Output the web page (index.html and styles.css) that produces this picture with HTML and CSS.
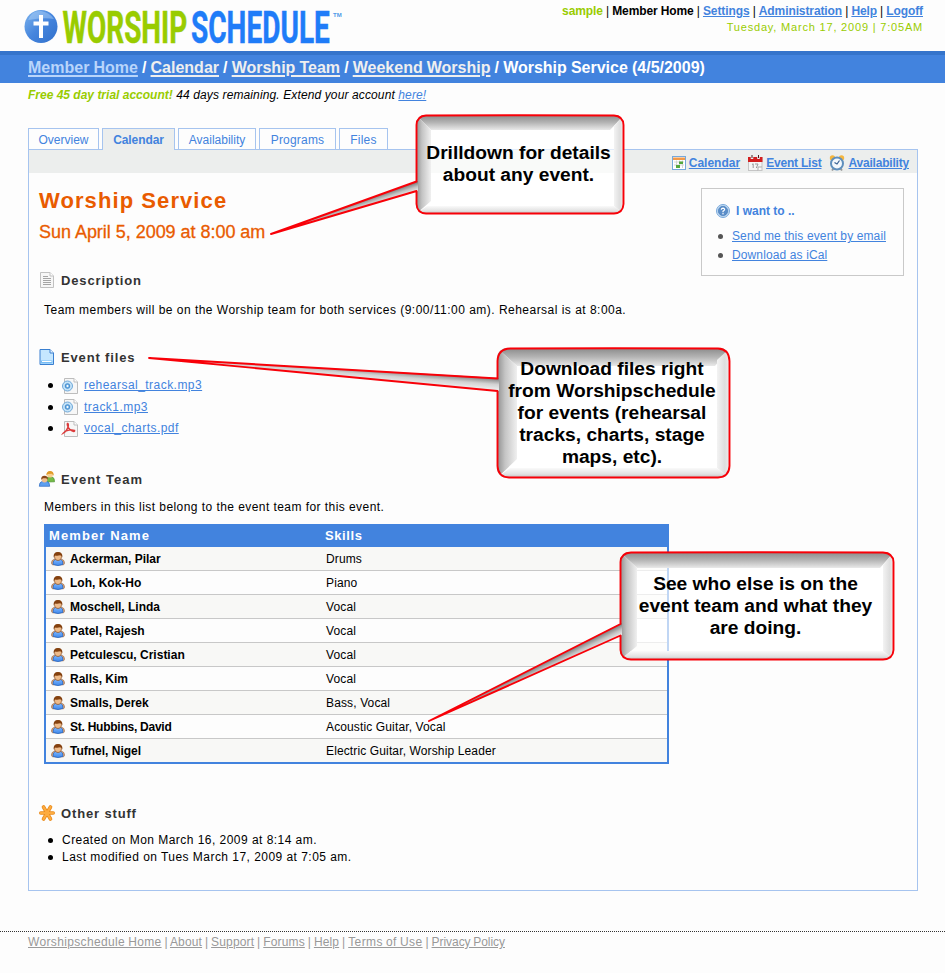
FILE: index.html
```html
<!DOCTYPE html>
<html lang="en">
<head>
<meta charset="utf-8">
<title>Worship Service</title>
<link rel="stylesheet" href="styles.css">
</head>
<body>
<svg class="defs" width="0" height="0" aria-hidden="true">
  <defs>
    <linearGradient id="orb" x1="0" y1="0" x2="1" y2="1"><stop offset="0" stop-color="#7db4ee"/><stop offset=".5" stop-color="#4585dd"/><stop offset="1" stop-color="#3170cb"/></linearGradient>
    <linearGradient id="top" x1="0" y1="0" x2="0" y2="1"><stop offset="0" stop-color="#8a8a8a"/><stop offset=".5" stop-color="#b4b4b4"/><stop offset="1" stop-color="#e9e9e9"/></linearGradient>
    <linearGradient id="left" x1="0" y1="0" x2="1" y2="0"><stop offset="0" stop-color="#8f8f8f"/><stop offset=".4" stop-color="#c4c4c4"/><stop offset="1" stop-color="#f0f0f0"/></linearGradient>
    <linearGradient id="right" x1="0" y1="0" x2="1" y2="0"><stop offset="0" stop-color="#f3f3f3"/><stop offset=".6" stop-color="#dedede"/><stop offset="1" stop-color="#f0f0f0"/></linearGradient>
    <linearGradient id="bottom" x1="0" y1="0" x2="0" y2="1"><stop offset="0" stop-color="#fafafa"/><stop offset=".6" stop-color="#e2e2e2"/><stop offset="1" stop-color="#bdbdbd"/></linearGradient>
    <linearGradient id="shirt" x1="0" y1="0" x2="0" y2="1"><stop offset="0" stop-color="#7db6ff"/><stop offset="1" stop-color="#3c86ea"/></linearGradient>
    <linearGradient id="tail1" gradientUnits="userSpaceOnUse" x1="416" y1="182" x2="419" y2="191"><stop offset="0" stop-color="#777"/><stop offset=".5" stop-color="#c2c2c2"/><stop offset="1" stop-color="#f2f2f2"/></linearGradient>
    <linearGradient id="tail2" gradientUnits="userSpaceOnUse" x1="498" y1="378" x2="497" y2="391"><stop offset="0" stop-color="#777"/><stop offset=".5" stop-color="#d2d2d2"/><stop offset="1" stop-color="#f2f2f2"/></linearGradient>
    <linearGradient id="tail3" gradientUnits="userSpaceOnUse" x1="616" y1="626" x2="621" y2="636"><stop offset="0" stop-color="#777"/><stop offset=".5" stop-color="#c2c2c2"/><stop offset="1" stop-color="#f2f2f2"/></linearGradient>
    <symbol id="i-user" viewBox="0 0 14 14">
      <path d="M.4 11.500Q.4 7.800 3.500 7.200H10.500Q13.600 7.800 13.600 11.500L12.500 12.800H1.500Z" fill="#dfa878" stroke="#99694a" stroke-width=".7"/>
      <path d="M2 12.300Q2 8.300 4.300 7.400L7 8.400L9.700 7.400Q12 8.300 12 12.300Q7 14.900 2 12.300Z" fill="url(#shirt)" stroke="#2b68c0" stroke-width=".8"/>
      <ellipse cx="7" cy="4.600" rx="3.600" ry="3.900" fill="#eebb8a" stroke="#8f5528" stroke-width=".7"/>
      <path d="M2.700 5.400Q2 .2 7 .1Q12 .2 11.300 5.400Q10.600 3.900 9.300 3.300Q6 4.200 4.200 3.400Q3.500 4 2.700 5.400Z" fill="#84410f"/>
    </symbol>
    <symbol id="i-audio" viewBox="0 0 16 16">
      <path d="M2.500.5H12L15.500 4V15.500H2.500Z" fill="#f7f7f7" stroke="#bdbdbd"/>
      <path d="M12 .5V4H15.500" fill="#fff" stroke="#bdbdbd"/>
      <circle cx="5.500" cy="8" r="5" fill="#c5e3f7" stroke="#70a9da"/>
      <circle cx="5.500" cy="8" r="2.300" fill="#7bb6e5" stroke="#438bcf"/><circle cx="5.500" cy="8" r=".9" fill="#fff"/>
    </symbol>
  </defs>
</svg>

<header class="top">
  <svg class="logo" width="330" height="48" viewBox="0 0 330 48">
    <circle cx="17" cy="26.500" r="16.500" fill="url(#orb)"/>
    <path d="M4 20Q8 10 17 11Q25 12 30 19Q20 17 4 20Z" fill="#b3d5f8" opacity=".45"/>
    <path d="M17 15V38M9.500 23.500H24.500" stroke="#fff" stroke-width="4"/>
    <text class="logo-text green" transform="translate(38.5 42.500) scale(.64 1)" textLength="195" lengthAdjust="spacingAndGlyphs">WORSHIP</text>
    <text class="logo-text blue" transform="translate(167 42.500) scale(.64 1)" textLength="217" lengthAdjust="spacingAndGlyphs">SCHEDULE</text>
    <text class="logo-tm" x="309" y="17">TM</text>
  </svg>
  <div class="account">
    <div class="account-links"><b class="user">sample</b> | <b>Member Home</b> | <a href="#">Settings</a> | <a href="#">Administration</a> | <a href="#">Help</a> | <a href="#">Logoff</a></div>
    <div class="date">Tuesday, March 17, 2009 | 7:05AM</div>
  </div>
</header>

<nav class="crumbs"><a class="first" href="#">Member Home</a> / <a href="#">Calendar</a> / <a href="#">Worship Team</a> / <a href="#">Weekend Worship</a> / <span>Worship Service (4/5/2009)</span></nav>
<p class="trial"><b>Free 45 day trial account!</b> 44 days remaining. Extend your account <a href="#">here!</a></p>

<nav class="tabs">
  <a class="tab t1" href="#">Overview</a><a class="tab t2 active" href="#">Calendar</a><a class="tab t3" href="#">Availability</a><a class="tab t4" href="#">Programs</a><a class="tab t5" href="#">Files</a>
</nav>

<main class="panel">
  <div class="toolbar">
    <a class="tool" href="#"><svg width="14" height="14" viewBox="0 0 14 14"><rect x=".5" y=".5" width="13" height="13" fill="#fff" stroke="#76a9dc"/><path d="M1 1.500H13V4H1Z" fill="#f39a4a"/><path d="M2 6H12M2 9H12M4.500 4.500V12M7.500 4.500V12M10.500 4.500V12" stroke="#d5d5d5"/><path d="M7 5.500H11V8H7ZM4 9H8V12H4Z" fill="#55a83d"/></svg><span>Calendar</span></a>
    <a class="tool" href="#"><svg width="15" height="16" viewBox="0 0 15 16"><rect x=".5" y="2.500" width="13.500" height="13" fill="#f5f5f5" stroke="#c5c5c5"/><path d="M0 2H14.500V7H0Z" fill="#d21e1e"/><path d="M4 0V4M10.500 0V4" stroke="#eee" stroke-width="2.500"/><path d="M4 0V3M10.500 0V3" stroke="#4a2020"/><path d="M4 9.500L5.200 8.800V13M7 9H10L8.300 13" fill="none" stroke="#999"/><path d="M10 15.500V12H14" fill="#fff" stroke="#aaa"/></svg><span class="tight">Event List</span></a>
    <a class="tool" href="#"><svg width="16" height="16" viewBox="0 0 16 16"><circle cx="3.500" cy="3" r="2.700" fill="#f4b63f"/><circle cx="12.500" cy="3" r="2.700" fill="#f4b63f"/><path d="M3 15.500L5 13M13 15.500L11 13" stroke="#999" stroke-width="2"/><circle cx="8" cy="8.500" r="6" fill="#f3f8fc" stroke="#5f8fbd" stroke-width="2"/><path d="M10.500 5.500L8 9L5.500 7.500" fill="none" stroke="#355f92" stroke-width="1.200"/></svg><span class="tight">Availability</span></a>
  </div>

  <div class="intro">
    <div class="title">
      <h1>Worship Service</h1>
      <h2>Sun April 5, 2009 at 8:00 am</h2>
    </div>
    <aside class="wants">
      <h4><svg width="14" height="14" viewBox="0 0 14 14"><circle cx="7" cy="7" r="6.500" fill="#c6def4" stroke="#79a9dc"/><circle cx="7" cy="7" r="4.700" fill="#5b8ec9" stroke="#3e75b6" stroke-width=".6"/><path d="M5.300 5.800Q5.400 4.200 7 4.200Q8.700 4.300 8.600 5.700Q8.400 6.500 7 7.200V8.200" fill="none" stroke="#fff" stroke-width="1.200"/><circle cx="7" cy="9.800" r=".75" fill="#fff"/></svg>I want to ..</h4>
      <ul><li><a href="#">Send me this event by email</a></li><li><a href="#">Download as iCal</a></li></ul>
    </aside>
  </div>

  <section class="description">
    <h3><svg width="16" height="16" viewBox="0 0 16 16"><path d="M1.500.5H11L14.500 4V15.500H1.500Z" fill="#f7f7f7" stroke="#c1c1c1"/><path d="M11 .5V4H14.500" fill="#fff" stroke="#c1c1c1"/><path d="M4 4.500H9M4 6.500H12M4 8.500H12M4 10.500H12M4 12.500H12" stroke="#a5a5a5"/></svg>Description</h3>
    <p>Team members will be on the Worship team for both services (9:00/11:00 am). Rehearsal is at 8:00a.</p>
  </section>

  <section class="files">
    <h3><svg width="16" height="16" viewBox="0 0 16 16"><path d="M1 .5H11L14.500 4V15.500H1Z" fill="#c5e7ff" stroke="#3a7fd0"/><path d="M11 .5V4H14.500" fill="#eaf7ff" stroke="#3a7fd0"/><path d="M2 11.500H13.500V14.500H2Z" fill="#77bdf5"/><path d="M3 12.500H12.500" stroke="#fff"/></svg>Event files</h3>
    <ul>
      <li><svg width="16" height="16"><use href="#i-audio"/></svg><a href="#">rehearsal_track.mp3</a></li>
      <li><svg width="16" height="16"><use href="#i-audio"/></svg><a href="#">track1.mp3</a></li>
      <li><svg width="16" height="16" viewBox="0 0 16 16"><path d="M2.500.5H12L15.500 4V15.500H2.500Z" fill="#f7f7f7" stroke="#bdbdbd"/><path d="M12 .5V4H15.500" fill="#fff" stroke="#bdbdbd"/><path d="M.8 12.500Q5 10 6.300 5.500Q6.800 2.500 5.600 2.300Q4.600 2.800 6 6Q7.800 9.500 11.800 10.500Q13 10.300 12.600 9.300Q9 8.300 4.300 10Q1.500 11.300.8 12.500Z" fill="none" stroke="#dc3b3b" stroke-width="1.300"/></svg><a href="#">vocal_charts.pdf</a></li>
    </ul>
  </section>

  <section class="team">
    <h3><svg width="16" height="16" viewBox="0 0 16 16"><path d="M6.500 11Q6.500 6.500 9 6H13Q15.700 6.500 15.500 10.800Z" fill="#74bb45" stroke="#4e9130" stroke-width=".7"/><circle cx="11" cy="3.700" r="2.900" fill="#f8cf8e"/><path d="M7.300 4.500Q7.300 0 11 0Q15 0 14.700 4.800L12.900 2.700L9 3Z" fill="#e09a27"/><path d="M.3 15.300Q.3 11 3 10.500H8Q10.700 11 10.700 15.300Z" fill="#5d9ff0" stroke="#2b68c0" stroke-width=".7"/><circle cx="5.500" cy="8.500" r="2.900" fill="#efbd8c"/><path d="M2.200 8.800Q1.900 4.800 5.500 4.800Q9.100 4.800 8.800 8.800L7.200 7.300H4Z" fill="#8a4718"/></svg>Event Team</h3>
    <p>Members in this list belong to the event team for this event.</p>
    <div class="table">
      <div class="row head"><span>Member Name</span><span>Skills</span></div>
      <div class="row"><b><svg width="14" height="14"><use href="#i-user"/></svg>Ackerman, Pilar</b><span>Drums</span></div>
      <div class="row"><b><svg width="14" height="14"><use href="#i-user"/></svg>Loh, Kok-Ho</b><span>Piano</span></div>
      <div class="row"><b><svg width="14" height="14"><use href="#i-user"/></svg>Moschell, Linda</b><span>Vocal</span></div>
      <div class="row"><b><svg width="14" height="14"><use href="#i-user"/></svg>Patel, Rajesh</b><span>Vocal</span></div>
      <div class="row"><b><svg width="14" height="14"><use href="#i-user"/></svg>Petculescu, Cristian</b><span>Vocal</span></div>
      <div class="row"><b><svg width="14" height="14"><use href="#i-user"/></svg>Ralls, Kim</b><span>Vocal</span></div>
      <div class="row"><b><svg width="14" height="14"><use href="#i-user"/></svg>Smalls, Derek</b><span>Bass, Vocal</span></div>
      <div class="row"><b class="tight"><svg width="14" height="14"><use href="#i-user"/></svg>St. Hubbins, David</b><span>Acoustic Guitar, Vocal</span></div>
      <div class="row"><b><svg width="14" height="14"><use href="#i-user"/></svg>Tufnel, Nigel</b><span>Electric Guitar, Worship Leader</span></div>
    </div>
  </section>

  <section class="other">
    <h3><svg width="16" height="16" viewBox="0 0 16 16"><path d="M8 8L4.500 2M8 8L11.500 2M8 8H1.800M8 8H14.200M8 8L4.500 14M8 8L11.500 14" stroke="#e88a1c" stroke-width="3.600" stroke-linecap="round"/><path d="M8 8L4.500 2M8 8L11.500 2M8 8H1.800M8 8H14.200M8 8L4.500 14M8 8L11.500 14" stroke="#fdab3f" stroke-width="2.200" stroke-linecap="round"/></svg>Other stuff</h3>
    <ul><li>Created on Mon March 16, 2009 at 8:14 am.</li><li>Last modified on Tues March 17, 2009 at 7:05 am.</li></ul>
  </section>
</main>

<footer class="footer"><a class="home" href="#">Worshipschedule Home</a> | <a href="#">About</a> | <a href="#">Support</a> | <a href="#">Forums</a> | <a href="#">Help</a> | <a class="terms" href="#">Terms of Use</a> | <a class="tight" href="#">Privacy Policy</a></footer>

<div class="callout c1">
  <svg width="356" height="124" viewBox="270 113 356 124">
    <clipPath id="k1"><rect x="416" y="115" width="208" height="99" rx="9"/></clipPath>
    <g clip-path="url(#k1)">
      <rect x="416" y="115" width="208" height="99" fill="#fff" opacity=".67"/>
      <path d="M416 115H624L610 130H431Z" fill="url(#top)"/><path d="M416 115L431 130V201L416 214Z" fill="url(#left)"/><path d="M624 115V214L614 206V126Z" fill="url(#right)"/><path d="M416 214L427 206H614L624 214Z" fill="url(#bottom)"/>
    </g>
    <path d="M271 234L418 181V191Z" fill="url(#tail1)"/>
    <path class="edge" d="M271 234L416.500 181.500V125Q417 116 426 115.500Q520 115 614 115.500Q623 116 623.500 125V204Q623 213 614 213.500H426Q417 213 416.500 204V191Z"/>
  </svg>
  <p>Drilldown for details<br>about any event.</p>
</div>
<div class="callout c2">
  <svg width="584" height="134" viewBox="148 346 584 134">
    <clipPath id="k2"><rect x="497" y="348" width="233" height="130" rx="10"/></clipPath>
    <g clip-path="url(#k2)">
      <rect x="497" y="348" width="233" height="130" fill="#fff" opacity=".67"/>
      <path d="M497 348H730L715 366H517Z" fill="url(#top)"/><path d="M497 348L517 366V459L497 478Z" fill="url(#left)"/><path d="M730 348V478L717 468V360Z" fill="url(#right)"/><path d="M497 478L510 468H717L730 478Z" fill="url(#bottom)"/>
    </g>
    <path d="M149 358L499 378V391Z" fill="url(#tail2)"/>
    <path class="edge" d="M149 358L497.500 378.500V361Q498 349 510 348.500Q614 348 718 348.500Q729 349 729.500 361V466Q729 477 718 477.500H509Q498 477 497.500 466V391Z"/>
  </svg>
  <p>Download files right<br>from Worshipschedule<br>for events (rehearsal<br>tracks, charts, stage<br>maps, etc).</p>
</div>
<div class="callout c3">
  <svg width="468" height="173" viewBox="428 550 468 173">
    <clipPath id="k3"><rect x="620" y="552" width="274" height="108" rx="9"/></clipPath>
    <g clip-path="url(#k3)">
      <rect x="620" y="552" width="274" height="108" fill="#fff" opacity=".67"/>
      <path d="M620 552H894L880 568H637Z" fill="url(#top)"/><path d="M620 552L637 568V646L620 660Z" fill="url(#left)"/><path d="M894 552V660L883 651V565Z" fill="url(#right)"/><path d="M620 660L631 651H883L894 660Z" fill="url(#bottom)"/>
    </g>
    <path d="M429 721L622 623V635Z" fill="url(#tail3)"/>
    <path class="edge" d="M429 721L620.500 624V562Q621 553 631 552.500Q757 552 883 552.500Q893 553 893.500 562V650Q893 659 883 659.500H631Q621 659 620.500 650V635.500Z"/>
  </svg>
  <p>See who else is on the<br>event team and what they<br>are doing.</p>
</div>
</body>
</html>
```
FILE: styles.css
```css
* { box-sizing: border-box; }
body { position: relative; margin: 0; width: 945px; height: 973px; overflow: hidden; background: #fdfdfd; color: #000; font: 12px/17px "Liberation Sans", Arial, sans-serif; }
h1, h2, h3, h4, p, ul { margin: 0; padding: 0; }
ul { list-style: none; }
a { color: #4283de; text-underline-offset: 1px; }
svg { display: block; flex: none; overflow: visible; }
.defs { position: absolute; }

.top { display: flex; justify-content: space-between; height: 51px; padding: 0 22px 0 24px; }
.logo-text { font: bold 44.500px Roboto, sans-serif; stroke-width: .5px; }
.green { fill: #9c0; stroke: #9c0; }
.blue { fill: #1f7cf8; stroke: #1f7cf8; }
.logo-tm { font: bold 6px "Liberation Sans", sans-serif; fill: #4e9ae8; }
.account { padding-top: 3px; text-align: right; line-height: 16px; }
.account a { font-weight: bold; }
.account-links { letter-spacing: -.1px; word-spacing: -.1px; }
.user { color: #9c0; }
.date { color: #9c0; font-size: 11px; letter-spacing: .81px; }

.crumbs { height: 32px; padding: 4px 28px 0; border-top: 4px solid #3574cb; background: #4283de; color: #fff; font: bold 16px/18px "Liberation Sans", Arial, sans-serif; word-spacing: -.35px; }
.crumbs a { color: #efefef; text-underline-offset: 2px; text-decoration-thickness: 2px; }
.crumbs .first { color: #b9d5fb; }
.trial { height: 45px; padding: 4px 28px 0; font-style: italic; letter-spacing: .12px; }
.trial b { color: #9c0; letter-spacing: 0; }

.tabs { position: relative; z-index: 1; display: flex; gap: 3px; height: 22px; padding-left: 28px; }
.tab { height: 21px; border: 1px solid #a6c4ef; border-bottom: 0; text-align: center; line-height: 22px; text-decoration: none; }
.tab.active { height: 22px; background: #eceeed; font-weight: bold; }
.t1 { width: 71px; }
.t2 { width: 73px; letter-spacing: -.1px; }
.t3 { width: 78px; }
.t4 { width: 77px; letter-spacing: .2px; }
.t5 { width: 49px; letter-spacing: .2px; }

.panel { width: 890px; height: 742px; margin: -1px 0 0 28px; border: 1px solid #a6c4ef; }
.toolbar { display: flex; justify-content: flex-end; gap: 8px; height: 23px; padding: 2px 8px 0 0; background: #eceeed; }
.tool { display: flex; align-items: center; gap: 3px; height: 23px; font-weight: bold; }
.tool:nth-child(n+2) { gap: 3px; }
.tool svg { margin-top: -1px; }
.tight { letter-spacing: -.2px; }

.intro { display: flex; justify-content: space-between; height: 98px; padding: 15px 13px 0 10px; }
h1 { padding-top: 1px; color: #e95b00; font-size: 22px; line-height: 24px; letter-spacing: 1.080px; }
h2 { margin-top: 8px; color: #e95b00; font-size: 18px; line-height: 22px; font-weight: normal; letter-spacing: -.03px; -webkit-text-stroke: .3px #e95b00; }
.wants { width: 203px; height: 88px; padding: 15px 14px; border: 1px solid #c9c9c9; color: #4283de; }
.wants h4 { display: flex; align-items: center; gap: 6px; height: 15px; font-size: 12px; }
.wants h4 svg { margin-top: -1px; }
.wants ul { padding-top: 8px; }
.wants li { display: flex; align-items: center; height: 19px; padding-left: 2px; letter-spacing: .12px; }
li::before { content: ""; flex: none; width: 5px; height: 5px; border-radius: 50%; background: #000; }
.wants li::before { margin-right: 9px; background: #555; }

h3 { display: flex; align-items: center; gap: 6px; height: 18px; padding-left: 10px; color: #333; font-size: 13px; letter-spacing: .85px; }
section { letter-spacing: .46px; }
section p { padding-left: 15px; }
.description { height: 77px; }
.description p { padding-top: 13px; letter-spacing: .48px; }
.files { height: 122px; }
.files ul { padding-top: 9px; }
.files li { display: flex; align-items: center; height: 21.500px; padding-left: 19px; }
.files li::before { margin-right: 9px; }
.files li a { margin-left: 6px; }
.team { height: 334px; }
.team h3 { letter-spacing: 1px; }
.team p { padding-top: 11px; letter-spacing: .44px; }
.table { width: 625px; margin: 8px 0 0 15px; border: 2px solid #4283de; border-top: 0; letter-spacing: .13px; }
.row { display: grid; grid-template-columns: 280px 1fr; height: 24px; border-bottom: 1px solid #c8c8c8; line-height: 24px; }
.row:nth-child(even) { background: #f8f8f6; }
.row:last-child { height: 23px; border: 0; }
.row b { display: flex; align-items: center; gap: 5px; padding-left: 5px; letter-spacing: 0; }
.row b.tight { letter-spacing: -.25px; }
.row.head { height: 23px; border: 0; background: #4283de; color: #fff; font-weight: bold; font-size: 13px; letter-spacing: .6px; }
.head span:first-child { padding-left: 3px; letter-spacing: 1.100px; }
.head span:last-child { margin-left: -1px; }
.other ul { padding-top: 10px; }
.other li { display: flex; align-items: center; height: 17px; padding-left: 19px; }
.other li::before { margin-right: 9px; }

.footer { margin-top: 40px; padding: 2px 28px; border-top: 1px dotted #333; color: #999; letter-spacing: .15px; word-spacing: -.6px; }
.footer a { color: #999; }
.footer .home { letter-spacing: .35px; }
.footer .terms { letter-spacing: .4px; }
.footer .tight { letter-spacing: -.05px; }

.callout { position: absolute; }
.callout p { position: absolute; text-align: center; white-space: nowrap; font: bold 19.200px/22px "Liberation Sans", Arial, sans-serif; }
.edge { fill: none; stroke: #f80008; stroke-width: 1.900; stroke-linejoin: round; }
.c1 { left: 270px; top: 113px; }
.c1 p { left: 146px; top: 29px; width: 205px; }
.c2 { left: 148px; top: 346px; }
.c2 p { left: 349px; top: 12px; width: 230px; }
.c3 { left: 428px; top: 550px; }
.c3 p { left: 192px; top: 23px; width: 271px; }
```
